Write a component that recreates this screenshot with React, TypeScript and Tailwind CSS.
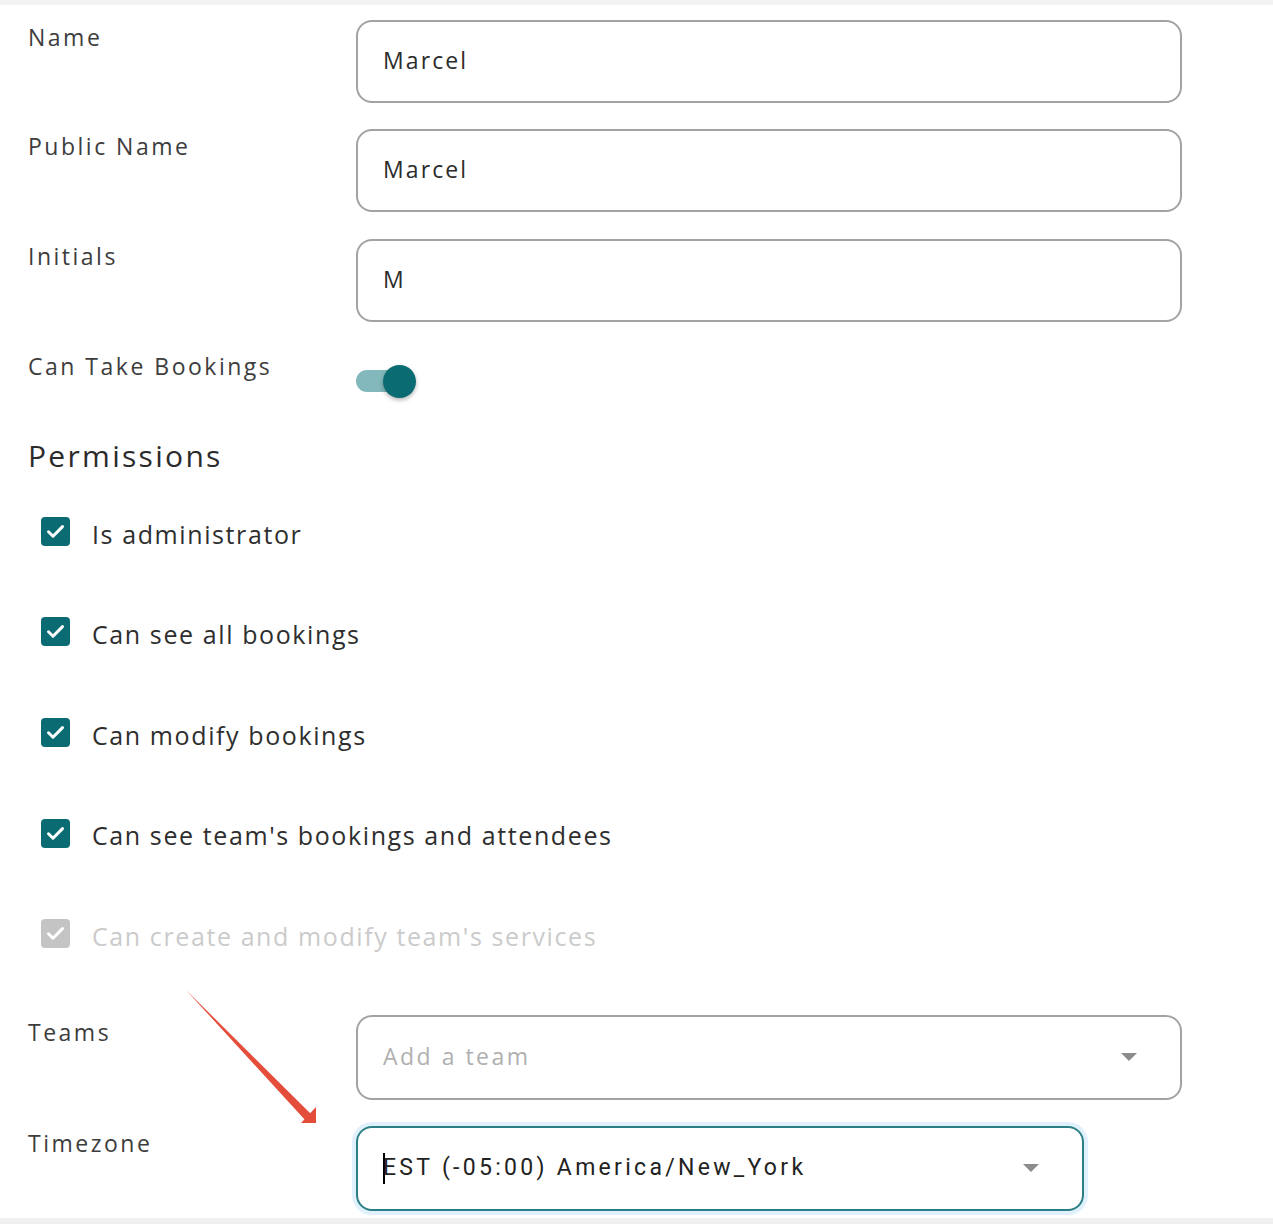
import React from "react";

const font = "font-['Open_Sans',sans-serif]";

const Label = ({ children }: { children: React.ReactNode }) => (
  <div className="w-[328px] shrink-0 text-[23px] leading-[28px] tracking-[2.5px] text-[#3d3d3d]">{children}</div>
);

const TextInput = ({ value }: { value: string }) => (
  <div className="w-[826px] h-[83px] rounded-[16px] border-2 border-[#a3a3a3] flex items-center pl-[25px] pb-[2px] text-[23px] tracking-[2.1px] text-[#2c2c2c]">
    {value}
  </div>
);

const Caret = () => (
  <svg width="18" height="10" viewBox="0 0 18 10">
    <path d="M1 1 L17 1 L9 9 Z" fill="#8c8c8c" />
  </svg>
);

const Check = ({ disabled }: { disabled?: boolean }) => (
  <div
    className={
      "w-[29px] h-[29px] rounded-[4px] flex items-center justify-center " +
      (disabled ? "bg-[#c4c4c4]" : "bg-[#0b6b72]")
    }
  >
    <svg width="29" height="29" viewBox="0 0 29 29">
      <path d="M7.5 14.8 L12 19.2 L21.5 9.6" fill="none" stroke="white" strokeWidth="3" strokeLinecap="round" strokeLinejoin="round" />
    </svg>
  </div>
);

const perms = [
  { text: "Is administrator" },
  { text: "Can see all bookings" },
  { text: "Can modify bookings" },
  { text: "Can see team's bookings and attendees" },
  { text: "Can create and modify team's services", disabled: true },
];

export default function App() {
  return (
    <div className={"relative w-[1273px] h-[1224px] bg-white overflow-hidden flex flex-col " + font}>
      <div className="h-[5px] bg-[#f3f3f3] shrink-0" />
      <div className="flex flex-col pl-[28px] grow">
        <div className="flex mt-[15px]">
          <div className="pt-[3px]"><Label>Name</Label></div>
          <TextInput value="Marcel" />
        </div>
        <div className="flex mt-[26px]">
          <div className="pt-[3px]"><Label>Public Name</Label></div>
          <TextInput value="Marcel" />
        </div>
        <div className="flex mt-[27px]">
          <div className="pt-[3px]"><Label>Initials</Label></div>
          <TextInput value="M" />
        </div>
        <div className="flex mt-[30px] h-[50px]">
          <Label>Can Take Bookings</Label>
          <div className="relative w-[64px] h-[48px]">
            <div className="absolute left-0 top-[18px] w-[52px] h-[22px] rounded-full bg-[#82b8bb]" />
            <div className="absolute left-[27px] top-[13px] w-[33px] h-[33px] rounded-full bg-[#0b6b72] shadow-[0_2px_4px_rgba(0,0,0,0.3)]" />
          </div>
        </div>
        <div className="mt-[35px] text-[30px] leading-[38px] font-medium tracking-[2.3px] text-[#2b2b2b]">Permissions</div>
        <div className="flex flex-col mt-[9px]">
          {perms.map((p) => (
            <div key={p.text} className="flex items-center h-[100.6px]">
              <div className="ml-[13px] -mt-[6px]">
                <Check disabled={p.disabled} />
              </div>
              <div className={"ml-[22px] text-[25px] tracking-[1.6px] " + (p.disabled ? "text-[#cbcbcb]" : "text-[#2e2e2e]")}>{p.text}</div>
            </div>
          ))}
        </div>
        <div className="flex mt-[28px]">
          <div className="pt-[3px]"><Label>Teams</Label></div>
          <div className="w-[826px] h-[85px] rounded-[16px] border-2 border-[#a3a3a3] flex items-center pl-[25px] pr-[42px] text-[23px] tracking-[2.5px] text-[#b0b0b0]">
            <span className="grow pb-[2px]">Add a team</span>
            <Caret />
          </div>
        </div>
        <div className="flex mt-[26px]">
          <div className="pt-[3px]"><Label>Timezone</Label></div>
          <div className="w-[728px] h-[85px] rounded-[16px] border-2 border-[#2a7f84] ring-4 ring-[#e0f0fd] flex items-center pl-[25px] pr-[42px] text-[23px] tracking-[3.3px] text-[#222] font-['Roboto',sans-serif]">
            <span className="w-[2px] h-[31px] bg-black -mr-[2px]" />
            <span className="grow">EST (-05:00) America/New_York</span>
            <Caret />
          </div>
        </div>
      </div>
      <div className="h-[6px] bg-[#f0f0f0] shrink-0" />
      <svg className="absolute left-0 top-0 pointer-events-none" width="1273" height="1224">
        <path d="M186 990 L312 1115 L306 1121 Z" fill="#e34d3a" />
        <path d="M316 1107 L316 1123 L301 1123 Z" fill="#e34d3a" />
      </svg>
    </div>
  );
}
